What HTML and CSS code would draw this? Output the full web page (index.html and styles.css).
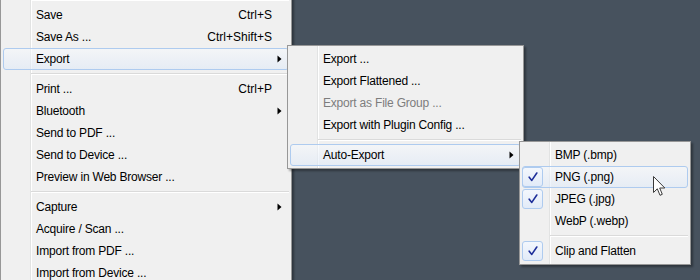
FILE: index.html
```html
<!DOCTYPE html>
<html>
<head>
<meta charset="utf-8">
<link rel="stylesheet" href="styles.css">
</head>
<body>
<div class="screen">
  <div class="menu main">
    <div class="sep"></div>
    <div class="item"><span class="gut"></span><span class="label">Save</span><span class="key">Ctrl+S</span><span class="sub"></span></div>
    <div class="item"><span class="gut"></span><span class="label">Save As ...</span><span class="key">Ctrl+Shift+S</span><span class="sub"></span></div>
    <div class="item hot"><span class="gut"></span><span class="label">Export</span><span class="key"></span><span class="sub"><svg class="tri" width="5" height="8" viewBox="0 0 5 8"><polygon points="0.5,0.5 4.5,4 0.5,7.5"/></svg></span></div>
    <div class="sep"></div>
    <div class="item"><span class="gut"></span><span class="label">Print ...</span><span class="key">Ctrl+P</span><span class="sub"></span></div>
    <div class="item"><span class="gut"></span><span class="label">Bluetooth</span><span class="key"></span><span class="sub"><svg class="tri" width="5" height="8" viewBox="0 0 5 8"><polygon points="0.5,0.5 4.5,4 0.5,7.5"/></svg></span></div>
    <div class="item"><span class="gut"></span><span class="label">Send to PDF ...</span><span class="key"></span><span class="sub"></span></div>
    <div class="item"><span class="gut"></span><span class="label">Send to Device ...</span><span class="key"></span><span class="sub"></span></div>
    <div class="item"><span class="gut"></span><span class="label">Preview in Web Browser ...</span><span class="key"></span><span class="sub"></span></div>
    <div class="sep"></div>
    <div class="item"><span class="gut"></span><span class="label">Capture</span><span class="key"></span><span class="sub"><svg class="tri" width="5" height="8" viewBox="0 0 5 8"><polygon points="0.5,0.5 4.5,4 0.5,7.5"/></svg></span></div>
    <div class="item"><span class="gut"></span><span class="label">Acquire / Scan ...</span><span class="key"></span><span class="sub"></span></div>
    <div class="item"><span class="gut"></span><span class="label">Import from PDF ...</span><span class="key"></span><span class="sub"></span></div>
    <div class="item"><span class="gut"></span><span class="label">Import from Device ...</span><span class="key"></span><span class="sub"></span></div>
  </div>

  <div class="menu export">
    <div class="item"><span class="gut"></span><span class="label">Export ...</span><span class="key"></span><span class="sub"></span></div>
    <div class="item"><span class="gut"></span><span class="label">Export Flattened ...</span><span class="key"></span><span class="sub"></span></div>
    <div class="item disabled"><span class="gut"></span><span class="label">Export as File Group ...</span><span class="key"></span><span class="sub"></span></div>
    <div class="item"><span class="gut"></span><span class="label">Export with Plugin Config ...</span><span class="key"></span><span class="sub"></span></div>
    <div class="sep"></div>
    <div class="item hot"><span class="gut"></span><span class="label">Auto-Export</span><span class="key"></span><span class="sub"><svg class="tri" width="5" height="8" viewBox="0 0 5 8"><polygon points="0.5,0.5 4.5,4 0.5,7.5"/></svg></span></div>
  </div>

  <div class="menu auto">
    <div class="item"><span class="gut"></span><span class="label">BMP (.bmp)</span><span class="key"></span><span class="sub"></span></div>
    <div class="item hot"><span class="gut"><span class="check"><svg width="10" height="10" viewBox="0 0 10 10"><path d="M1.2 5.2 L3.8 8.4 L8.8 1"/></svg></span></span><span class="label">PNG (.png)</span><span class="key"></span><span class="sub"></span></div>
    <div class="item"><span class="gut"><span class="check"><svg width="10" height="10" viewBox="0 0 10 10"><path d="M1.2 5.2 L3.8 8.4 L8.8 1"/></svg></span></span><span class="label">JPEG (.jpg)</span><span class="key"></span><span class="sub"></span></div>
    <div class="item"><span class="gut"></span><span class="label">WebP (.webp)</span><span class="key"></span><span class="sub"></span></div>
    <div class="sep"></div>
    <div class="item"><span class="gut"><span class="check"><svg width="10" height="10" viewBox="0 0 10 10"><path d="M1.2 5.2 L3.8 8.4 L8.8 1"/></svg></span></span><span class="label">Clip and Flatten</span><span class="key"></span><span class="sub"></span></div>
  </div>

  <svg class="cursor" width="13" height="21" viewBox="0 0 13 21">
    <polygon points="0.5,0.5 0.5,16.5 4.3,12.8 7,19.3 9.3,18.3 6.7,12 11.8,12" />
  </svg>
</div>
</body>
</html>
```

FILE: styles.css
```css
* { box-sizing: border-box; }

html, body {
  margin: 0;
  padding: 0;
}

body {
  font-family: "Liberation Sans", Arial, sans-serif;
  font-size: 12px;
  color: #000;
}

.screen {
  position: relative;
  width: 700px;
  height: 280px;
  overflow: hidden;
  background: #47525e;
}

.menu {
  background-color: #f0f0f0;
  background-image: linear-gradient(90deg,
    transparent 29px, #e2e3e3 29px, #e2e3e3 30px,
    #ffffff 30px, #ffffff 31px, transparent 31px);
  border: 1px solid #979797;
  padding: 2px;
  box-shadow: 2px 2px 2px rgba(0, 0, 0, 0.35);
}

.main {
  width: 292px;
  margin-top: -7px;
}

.export {
  position: absolute;
  left: 287px;
  top: 45px;
  width: 237px;
}

.auto {
  position: absolute;
  left: 519px;
  top: 141px;
  width: 172px;
}

.item {
  display: grid;
  grid-template-columns: 31px 1fr auto 16px;
  align-items: center;
  height: 22px;
  border: 1px solid transparent;
  border-radius: 3px;
  white-space: nowrap;
}

.item .label {
  padding-left: 1px;
  letter-spacing: -0.2px;
}

.item.hot {
  border-color: #aecbef;
  background: linear-gradient(rgba(246, 249, 253, 0.55), rgba(222, 233, 248, 0.55));
}

.item.disabled {
  color: #7d7d7d;
}

.gut {
  display: flex;
  align-items: center;
  height: 20px;
}

.key {
  text-align: right;
}

.sub {
  display: flex;
  align-items: center;
  padding-left: 5px;
}

.tri polygon {
  fill: #000;
}

.check {
  display: flex;
  align-items: center;
  justify-content: center;
  width: 21px;
  height: 20px;
  margin-left: -1px;
  border: 1px solid #aecbef;
  border-radius: 3px;
  background: linear-gradient(#f3f7fd, #e2ebf8);
}

.check path {
  fill: none;
  stroke: #1e2f9a;
  stroke-width: 1.6;
  stroke-linecap: round;
  stroke-linejoin: round;
}

.sep {
  height: 8px;
  margin-left: 28px;
  background: linear-gradient(transparent 3px, #dadada 3px, #dadada 4px, #ffffff 4px, #ffffff 5px, transparent 5px);
}

.cursor {
  position: absolute;
  left: 653px;
  top: 176px;
}

.cursor polygon {
  fill: #ffffff;
  stroke: #3a3a3a;
  stroke-width: 1;
  stroke-linejoin: miter;
}
```
